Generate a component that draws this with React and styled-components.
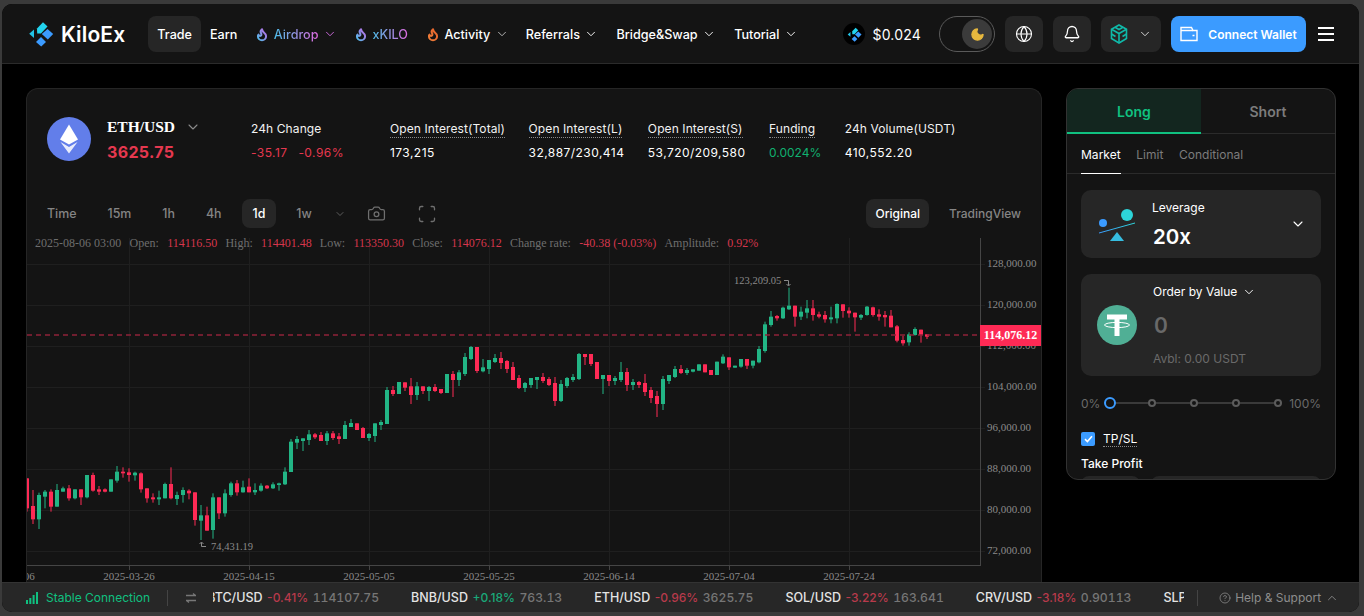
import React from "react";
import styled, { createGlobalStyle } from "styled-components";
import { Bell, Camera, ChevronDown, ChevronUp, CircleHelp, Globe, Moon, Scan } from "lucide-react";

const GlobalStyle = createGlobalStyle`
  html, body { margin: 0; padding: 0; height: 100%; background: #3a3a3a; overflow: hidden; }
  * { box-sizing: border-box; }
  body { font-family: Inter, "Noto Sans", sans-serif; color: #fff; }
`;

const App_ = styled.div`
  margin: 4px 5px 4px 2px;
  height: 608px;
  display: flex;
  flex-direction: column;
  background: #000;
  border-radius: 10px;
  overflow: hidden;
`;

const Header = styled.header`
  height: 60px;
  flex: none;
  display: flex;
  align-items: center;
  padding: 1px 25px 0 26px;
  background: #141414;
  border-bottom: 1px solid #2b2b2b;
`;
const Logo = styled.div`
  display: flex;
  align-items: center;
  gap: 7px;
  margin-right: 23px;
  font-size: 21px;
  font-weight: 600;
  letter-spacing: 0.15px;
`;
const Nav = styled.nav`
  display: flex;
  align-items: center;
`;
const NavItem = styled.div`
  height: 36px;
  padding: 0 9px;
  display: flex;
  align-items: center;
  gap: 4.5px;
  font-size: 12.6px;
  font-weight: 500;
  border-radius: 8px;
  color: #fff;
  background: ${(p) => (p.$active ? "#262626" : "transparent")};
  svg:last-child:not(:first-child) { margin-right: -1px; }
`;
const GradientLabel = styled.span`
  background: linear-gradient(90deg, #4dbde8, #e06ae0);
  -webkit-background-clip: text;
  background-clip: text;
  color: transparent;
`;
const HeaderRight = styled.div`
  margin-left: auto;
  display: flex;
  align-items: center;
  gap: 10px;
`;
const TokenPrice = styled.div`
  display: flex;
  align-items: center;
  gap: 7px;
  margin-right: 8px;
  font-size: 14px;
  font-weight: 400;
  letter-spacing: 0.2px;
`;
const TokenBadge = styled.div`
  width: 22px;
  height: 22px;
  border-radius: 50%;
  background: #000;
  display: flex;
  align-items: center;
  justify-content: center;
`;
const Toggle = styled.div`
  width: 56px;
  height: 36px;
  border-radius: 18px;
  border: 1px solid #5a5a5a;
  display: flex;
  align-items: center;
  justify-content: flex-end;
  padding-right: 2px;
`;
const ToggleKnob = styled.div`
  width: 30px;
  height: 30px;
  border-radius: 50%;
  background: #3b3b3b;
  display: flex;
  align-items: center;
  justify-content: center;
`;
const IconButton = styled.div`
  width: ${(p) => p.$w || 38}px;
  height: 36px;
  border-radius: 8px;
  background: #262626;
  display: flex;
  align-items: center;
  justify-content: center;
  gap: 10px;
`;
const WalletButton = styled.div`
  width: 135px;
  height: 36px;
  border-radius: 8px;
  background: #3b9bff;
  display: flex;
  align-items: center;
  justify-content: center;
  gap: 10px;
  font-size: 12px;
  font-weight: 600;
`;
const Burger = styled.div`
  margin-left: 2px;
  width: 16px;
  display: flex;
  flex-direction: column;
  gap: 4.7px;
  span { height: 1.3px; background: #fff; display: block; }
`;

const Main = styled.main`
  flex: 1;
  min-height: 0;
  display: flex;
  gap: 24px;
  padding: 24px 23px 0 24px;
`;
const ChartPanel = styled.section`
  width: 1016px;
  flex: none;
  display: flex;
  flex-direction: column;
  background: #141414;
  border: 1px solid #252525;
  border-bottom: 0;
  border-radius: 12px 12px 0 0;
  overflow: hidden;
`;
const PairHeader = styled.div`
  height: 110px;
  flex: none;
  padding: 28px 20px 0;
  display: flex;
  align-items: flex-start;
`;
const PairBlock = styled.div`
  width: 144px;
  margin-left: 16px;
  flex: none;
`;
const PairName = styled.div`
  height: 20px;
  display: flex;
  align-items: center;
  gap: 10px;
  font-family: "Liberation Serif", serif;
  font-size: 15.5px;
  font-weight: 700;
  svg { color: #8a8a8a; }
`;
const PairPrice = styled.div`
  margin-top: 5px;
  font-size: 16px;
  font-weight: 700;
  letter-spacing: 0.35px;
  color: #e5384f;
`;
const Stats = styled.div`
  margin-top: 3px;
  display: flex;
  gap: 23.5px;
`;
const Stat = styled.div`
  display: flex;
  flex-direction: column;
  align-items: flex-start;
  font-size: 12px;
  width: ${(p) => (p.$w ? `${p.$w}px` : "auto")};
`;
const StatLabel = styled.span`
  height: 18px;
  line-height: 17px;
  color: #f2f2f2;
  border-bottom: 1px ${(p) => (p.$plain ? "none" : "dotted")} #8a8a8a;
  white-space: nowrap;
  letter-spacing: 0.1px;
`;
const StatValue = styled.span`
  margin-top: 7px;
  line-height: 16px;
  letter-spacing: ${(p) => (p.$tight ? 0 : 0.45)}px;
  white-space: nowrap;
  color: ${(p) => p.$color || "#fff"};
  word-spacing: ${(p) => p.$spaced || 0}px;
`;
const Toolbar = styled.div`
  height: 29px;
  flex: none;
  margin-bottom: 8px;
  padding: 0 9px;
  display: flex;
  align-items: center;
  gap: 9px;
`;
const TimeButton = styled.div`
  height: 29px;
  padding: 0 ${(p) => p.$px || 11}px;
  display: flex;
  align-items: center;
  border-radius: 8px;
  font-size: 12.4px;
  font-weight: 500;
  white-space: nowrap;
  color: ${(p) => (p.$active ? "#fff" : "#858585")};
  background: ${(p) => (p.$active ? "#262626" : "transparent")};
`;
const ViewButton = styled(TimeButton)`
  font-size: 12px;
`;
const ToolIcon = styled.div`
  display: flex;
  align-items: center;
  color: #6f6f6f;
  margin-left: ${(p) => p.$ml || 0}px;
`;
const ViewSwitch = styled.div`
  margin-left: auto;
  display: flex;
  gap: 9px;
`;
const ChartArea = styled.div`
  position: relative;
  flex: 1;
  min-height: 0;
`;
const Ohlc = styled.div`
  position: absolute;
  left: 8px;
  top: 0;
  height: 14px;
  display: flex;
  align-items: center;
  gap: 8.2px;
  font-family: "Liberation Serif", serif;
  font-size: 12px;
  color: #6e6e6e;
  white-space: nowrap;
  b { font-weight: 400; color: #d6364c; margin-left: 8.3px; }
`;

const SidePanel = styled.aside`
  width: 270px;
  height: 392px;
  flex: none;
  background: #141414;
  border: 1px solid #323232;
  border-radius: 12px;
  overflow: hidden;
`;
const SideTabs = styled.div`
  display: flex;
  height: 45px;
  border-bottom: 1px solid #2b2b2b;
`;
const SideTab = styled.div`
  flex: 1;
  margin-bottom: -1px;
  padding-top: 2px;
  display: flex;
  align-items: center;
  justify-content: center;
  font-size: 14px;
  font-weight: 600;
  color: ${(p) => (p.$active ? "#10c080" : "#7c7c7c")};
  background: ${(p) => (p.$active ? "#13261f" : "transparent")};
  border-bottom: 2px solid ${(p) => (p.$active ? "#10c080" : "transparent")};
`;
const SubTabs = styled.div`
  height: 40px;
  padding: 0 14px;
  display: flex;
  gap: 15.5px;
  border-bottom: 1px solid #2b2b2b;
`;
const SubTab = styled.div`
  height: 40px;
  padding-top: 2px;
  display: flex;
  align-items: center;
  font-size: 12px;
  letter-spacing: 0.03px;
  color: ${(p) => (p.$active ? "#fff" : "#7c7c7c")};
  border-bottom: 1px solid ${(p) => (p.$active ? "#fff" : "transparent")};
`;
const SideBody = styled.div`
  padding: 16px 14px 0;
`;
const Card = styled.div`
  height: ${(p) => p.$h}px;
  background: #262626;
  border-radius: 10px;
  display: flex;
  align-items: center;
  margin-bottom: 16px;
  padding-left: 16px;
`;
const CardText = styled.div`
  margin-left: ${(p) => p.$ml}px;
  flex: 1;
  display: flex;
  flex-direction: column;
`;
const CardLabel = styled.div`
  font-size: 12px;
  line-height: 16px;
  display: flex;
  align-items: center;
  gap: 5px;
`;
const LeverageValue = styled.div`
  margin: 8px 0 -2px 1px;
  font-size: 20.5px;
  line-height: 26px;
  font-weight: 600;
`;
const AmountValue = styled.div`
  margin: 14px 0 0 1px;
  font-size: 21px;
  line-height: 24px;
  font-weight: 600;
  color: #696969;
`;
const Avbl = styled.div`
  margin-top: 13px;
  font-size: 12px;
  line-height: 16px;
  color: #6a6a6a;
`;
const CardChevron = styled.div`
  margin-right: 15px;
  display: flex;
`;
const SliderRow = styled.div`
  height: 22px;
  margin-top: 16px;
  display: flex;
  align-items: center;
  font-size: 12px;
  color: #6a6a6a;
`;
const SliderTrack = styled.div`
  flex: 1;
  height: 2px;
  margin: 0 7px 0 6px;
  background: #3a3a3a;
  display: flex;
  align-items: center;
  justify-content: space-between;
`;
const SliderDot = styled.div`
  flex: none;
  width: ${(p) => (p.$on ? 12 : 8)}px;
  height: ${(p) => (p.$on ? 12 : 8)}px;
  margin: 0 ${(p) => (p.$on ? -2 : 0)}px;
  border-radius: 50%;
  background: #141414;
  border: 2px solid ${(p) => (p.$on ? "#3b9bff" : "#5c5c5c")};
`;
const CheckRow = styled.div`
  margin-top: 17px;
  display: flex;
  align-items: center;
  gap: 8px;
  font-size: 12px;
`;
const Checkbox = styled.div`
  width: 14px;
  height: 14px;
  border-radius: 2px;
  background: #3b9bff;
  display: flex;
  align-items: center;
  justify-content: center;
`;
const Dotted = styled.span`
  line-height: 15px;
  border-bottom: 1px dotted #8a8a8a;
`;
const FieldLabel = styled.div`
  margin-top: 9px;
  font-size: 12px;
  font-weight: 500;
  line-height: 16px;
`;
const Fields = styled.div`
  margin-top: 4px;
  display: flex;
  gap: 11px;
`;
const Field = styled.div`
  height: 30px;
  flex: ${(p) => (p.$grow ? 1 : "none")};
  width: ${(p) => (p.$grow ? "auto" : "59px")};
  background: #262626;
  border-radius: 8px;
`;

const Footer = styled.footer`
  height: 30px;
  flex: none;
  background: #272727;
  border-top: 1px solid #333;
  display: flex;
  align-items: center;
  padding: 0 20px 0 24px;
  font-size: 12px;
`;
const Connection = styled.div`
  display: flex;
  align-items: center;
  gap: 8px;
  color: #10c080;
  white-space: nowrap;
`;
const Divider = styled.div`
  width: 1px;
  height: 16px;
  flex: none;
  background: #444;
  margin: ${(p) => p.$m};
`;
const TickerWindow = styled.div`
  width: 971px;
  flex: none;
  overflow: hidden;
  margin-left: 16px;
`;
const Track = styled.div`
  display: flex;
  gap: 32px;
  margin-left: -6px;
  font-size: 12.5px;
  font-weight: 500;
  white-space: nowrap;
`;
const Tick = styled.div`
  display: flex;
  align-items: baseline;
  gap: 4.5px;
  color: #e4e4e4;
`;
const TickPct = styled.span`
  font-size: 12px;
  color: ${(p) => (p.$up ? "#1aa879" : "#b83a4b")};
`;
const TickPrice = styled.span`
  font-size: 12.2px;
  font-variant-numeric: tabular-nums;
  color: #767676;
`;
const Help = styled.div`
  display: flex;
  align-items: center;
  gap: 4px;
  color: #8d8d8d;
  white-space: nowrap;
`;

const flame = "M8.5 14.5A2.5 2.5 0 0 0 11 12c0-1.38-.5-2-1-3-1.072-2.143-.224-4.054 2-6 .5 2.5 2 4.9 4 6.5 2 1.6 3 3.5 3 5.5a7 7 0 1 1-14 0c0-1.153.433-2.294 1-3a2.5 2.5 0 0 0 2.5 2.5z";

function Flame({ id, from, to }) {
  return (
    <svg width="14" height="15" viewBox="0 0 24 24" fill="none">
      <defs>
        <linearGradient id={id} x1="0" y1="1" x2="1" y2="0">
          <stop offset="0" stopColor={from} />
          <stop offset="1" stopColor={to} />
        </linearGradient>
      </defs>
      <path d={flame} stroke={`url(#${id})`} strokeWidth="3.4" strokeLinejoin="round" />
    </svg>
  );
}

function KiloMark({ size = 26 }) {
  return (
    <svg width={size} height={size} viewBox="0 0 26 26">
      <path d="M9 7.5 15 1.3 19.5 5.5 13 12.5 9.2 12.5z" fill="#22d3ee" />
      <path d="M6 8.5V17L1.2 12.8z" fill="#22c3e6" />
      <path d="M19.5 8 25.2 13 19.8 18.5 13.8 13z" fill="#3b9bff" />
      <path d="M13 16 18 21 13.2 25.6 8 21z" fill="#3b9bff" />
    </svg>
  );
}

const Chev = ({ size = 14, color = "currentColor" }) => <ChevronDown size={size} color={color} strokeWidth={1.6} />;

// Candles are [bodyTop, bodyBottom, wickTop, wickBottom, isUp], read at 3x from the picture.
const segments = [
  { x0: 20, y0: 440, start: 21, rows: [
    [115,205,115,215,0],[198,238,150,252,0],[165,238,158,267,1],[155,170,150,205,1],[155,200,148,215,0],[150,200,132,200,1],[145,155,140,155,1],[145,175,135,182,0],[148,175,148,178,1],[148,172,148,195,0],[105,172,105,175,1],[105,152,98,155,0],[148,155,138,165,0],[148,155,145,157,0],[118,155,118,155,1],[95,122,78,128,1],[95,100,82,113,0],[97,105,85,125,0],[98,106,95,122,1],[100,148,97,158,0],[145,175,145,188,0],[172,178,160,188,0],[172,178,152,195,1],[132,175,128,175,1],[132,175,82,178,0],[165,177,155,195,1],[150,165,142,188,1],[152,160,148,178,0],[157,240,157,257,0],[226,242,195,300,1],[226,272,200,272,0],[172,270,160,296,1],[172,220,172,237,0],[160,220,148,230,1],[130,165,125,170,1],[130,157,120,167,0],[142,157,122,158,1],[140,157,115,157,0],[150,157,130,165,1],[137,152,130,155,1],[137,145,135,147,0],[133,145,127,147,1],[130,135,128,152,1],[95,133,82,135,1],
  ]},
  { x0: 285, y0: 340, start: 18, rows: [
    [305,396,297,396,1],[297,308,288,327,1],[295,303,295,333,1],[283,300,270,315,1],[283,292,279,297,0],[285,303,276,303,0],[280,303,273,315,1],[280,294,273,300,0],[289,297,279,312,0],[255,297,243,297,1],[249,261,237,261,1],[250,270,250,270,0],[264,294,261,294,0],[282,294,279,303,1],[250,288,250,306,1],[246,255,240,270,1],[150,252,141,252,1],[150,162,138,168,0],[126,162,126,162,1],[127,143,127,153,0],[139,165,114,192,0],[139,165,126,180,1],[139,153,139,162,0],[141,153,138,183,1],[141,153,132,156,0],[147,159,147,162,0],[102,159,102,159,1],[102,120,93,171,0],[97,120,90,138,1],[51,102,39,108,1],[21,57,18,60,1],[21,93,21,99,0],
  ]},
  { x0: 480, y0: 340, start: 9, rows: [
    [82,94,57,97,1],[60,87,60,102,1],[54,66,42,69,1],[54,69,36,87,0],[63,87,60,99,0],[81,120,66,120,0],[114,144,105,147,0],[129,144,126,156,1],[114,135,114,144,1],[111,120,111,147,1],[111,123,99,129,0],[117,135,111,138,0],[129,183,111,198,0],[132,183,120,186,1],[114,138,111,144,1],[111,120,102,126,1],[42,117,39,120,1],[42,51,42,75,0],[42,72,42,78,0],[66,117,66,117,0],[105,117,105,162,1],[105,123,105,138,0],[114,123,108,135,1],[96,120,66,126,1],[96,135,84,153,0],[126,135,117,150,1],[126,135,123,144,0],[129,156,102,168,0],[150,174,141,189,0],[168,192,153,231,0],[117,192,108,210,1],[105,123,105,132,1],[87,111,78,114,1],[87,99,75,102,0],[90,99,84,105,1],
  ]},
  { x0: 680, y0: 265, start: 39, rows: [
    [313,320,313,322,1],[298,317,298,317,1],[298,322,298,322,0],[315,330,315,330,0],[290,330,290,330,1],[275,295,268,297,1],[277,307,277,315,0],[302,308,302,308,1],[282,305,282,308,1],[282,302,282,312,0],[287,302,287,310,1],[252,292,243,295,1],[178,258,170,263,1],[155,180,138,185,1],[153,160,150,167,0],[128,160,125,162,1],[122,133,68,135,1],[122,155,122,185,0],[140,155,125,165,1],[130,143,105,160,1],[130,150,105,167,0],[148,155,140,160,0],[150,163,138,173,0],[157,163,125,175,1],[117,160,115,175,1],[118,138,118,158,0],[137,145,127,158,0],[143,157,143,200,0],[150,158,147,165,1],[125,150,123,152,1],[127,150,125,155,0],[148,155,133,167,0],[150,157,138,185,0],[152,187,135,187,0],[184,227,180,232,0],[225,235,212,242,0],[208,232,202,242,1],[192,210,187,212,1],[194,210,194,233,0],[208,215,208,222,0],
  ]},
];

const candles = segments.flatMap((s) =>
  s.rows.map((r, i) => ({
    x: s.x0 + (s.start + i * 18) / 3,
    top: s.y0 + r[0] / 3,
    bottom: s.y0 + r[1] / 3,
    high: s.y0 + r[2] / 3,
    low: s.y0 + r[3] / 3,
    up: r[4] === 1,
  }))
);

const priceLevels = [
  ["128,000.00", 264], ["120,000.00", 305], ["112,000.00", 346], ["104,000.00", 387],
  ["96,000.00", 428], ["88,000.00", 469], ["80,000.00", 510], ["72,000.00", 551],
];
const dateMarks = [
  ["2025-03-06", 9], ["2025-03-26", 129], ["2025-04-15", 249], ["2025-05-05", 369], ["2025-05-25", 489],
  ["2025-06-14", 609], ["2025-07-04", 729], ["2025-07-24", 849],
];
const GREEN = "#22b585";
const RED = "#fe2a55";

function Chart() {
  const serif = '"Liberation Serif", serif';
  return (
    <svg width="1014" height="346" viewBox="27 236 1014 346" style={{ display: "block" }}>
      {priceLevels.map(([t, y]) => (
        <line key={t} x1="27" x2="985" y1={y + 0.5} y2={y + 0.5} stroke="#1f1f1f" />
      ))}
      {dateMarks.slice(1).map(([t, x]) => (
        <g key={t}>
          <line x1={x + 0.5} x2={x + 0.5} y1="238" y2="565" stroke="#1f1f1f" />
          <line x1={x + 0.5} x2={x + 0.5} y1="565" y2="570" stroke="#444" />
        </g>
      ))}
      <line x1="980.5" x2="980.5" y1="238" y2="566" stroke="#454545" />
      <line x1="27" x2="981" y1="565.5" y2="565.5" stroke="#454545" />
      {priceLevels.map(([t, y]) => (
        <text key={t} x="987" y={y + 3} fontFamily={serif} fontSize="11" fill="#8a8a8a">{t}</text>
      ))}
      {dateMarks.map(([t, x]) => (
        <text key={t} x={x} y="580" textAnchor="middle" fontFamily={serif} fontSize="11" fill="#8a8a8a">{t}</text>
      ))}
      {candles.map((c, i) => (
        <g key={i}>
          <line x1={c.x} x2={c.x} y1={c.high} y2={c.low} stroke={c.up ? GREEN : RED} strokeWidth="1" />
          <rect x={c.x - 2} y={c.top} width="4" height={Math.max(c.bottom - c.top, 1)} fill={c.up ? GREEN : RED} />
        </g>
      ))}
      <line x1="27" x2="980" y1="335" y2="335" stroke="#8f2239" strokeWidth="1.6" strokeDasharray="5 4" />
      <rect x="980" y="325" width="61" height="21" fill={RED} />
      <text x="1010.5" y="339" textAnchor="middle" fontFamily={serif} fontSize="12" fontWeight="700" fill="#fff">114,076.12</text>
      <text x="734" y="284" fontFamily={serif} fontSize="10.5" fill="#8a8a8a">123,209.05</text>
      <path d="M784 280.5h4.5v5M786.5 284l2 2 2-2" fill="none" stroke="#8a8a8a" />
      <text x="211" y="550" fontFamily={serif} fontSize="10.5" fill="#8a8a8a">74,431.19</text>
      <path d="M206 546.5h-4.5v-4M199.500 544l2-2 2 2" fill="none" stroke="#8a8a8a" />
    </svg>
  );
}

const tickers = [
  ["BTC/USD", "-0.41%", "114107.75"],
  ["BNB/USD", "+0.18%", "763.13", true],
  ["ETH/USD", "-0.96%", "3625.75"],
  ["SOL/USD", "-3.22%", "163.641"],
  ["CRV/USD", "-3.18%", "0.90113"],
  ["SLP/USD", "-1.02%", "0.00210"],
];

export default function App() {
  return (
    <App_>
      <GlobalStyle />
      <Header>
        <Logo>
          <KiloMark />
          <span>KiloEx</span>
        </Logo>
        <Nav>
          <NavItem $active>Trade</NavItem>
          <NavItem>Earn</NavItem>
          <NavItem>
            <Flame id="f1" from="#4dbde8" to="#c46ae8" />
            <GradientLabel>Airdrop</GradientLabel>
            <Chev color="#d06ae0" />
          </NavItem>
          <NavItem>
            <Flame id="f2" from="#4dbde8" to="#c46ae8" />
            <GradientLabel>xKILO</GradientLabel>
          </NavItem>
          <NavItem>
            <Flame id="f3" from="#f0803a" to="#e8622a" />
            Activity
            <Chev color="#bbb" />
          </NavItem>
          <NavItem>Referrals<Chev /></NavItem>
          <NavItem>Bridge&amp;Swap<Chev /></NavItem>
          <NavItem>Tutorial<Chev /></NavItem>
        </Nav>
        <HeaderRight>
          <TokenPrice>
            <TokenBadge><KiloMark size={15} /></TokenBadge>
            $0.024
          </TokenPrice>
          <Toggle>
            <ToggleKnob><Moon size={15} fill="#e8b93e" color="#e8b93e" /></ToggleKnob>
          </Toggle>
          <IconButton><Globe size={18} strokeWidth={1.5} /></IconButton>
          <IconButton><Bell size={18} strokeWidth={1.7} /></IconButton>
          <IconButton $w={60}>
            <svg width="18" height="20" viewBox="0 0 18 20" fill="none" stroke="#10b8a8" strokeWidth="1.6">
              <path d="M9 1 16.500 5.200V14.500L9 19 1.500 14.500V5.200z" />
              <path d="M1.500 5.200 9 9.500 16.500 5.200M9 9.500V19M5 3.200 9 5.500 13 3.200M1.500 10 5.500 12.500M16.500 10 12.500 12.500" />
            </svg>
            <Chev color="#ddd" />
          </IconButton>
          <WalletButton>
            <svg width="18" height="16" viewBox="0 0 18 16" fill="none" stroke="#fff" strokeWidth="1.4">
              <path d="M1 14.500V1.500H11.500L13 4.500H17V14.500z" />
              <path d="M1 4.500H13M12.500 9.500H14.500" />
            </svg>
            Connect Wallet
          </WalletButton>
          <Burger><span /><span /><span /></Burger>
        </HeaderRight>
      </Header>

      <Main>
        <ChartPanel>
          <PairHeader>
            <svg width="44" height="44" viewBox="0 0 44 44" style={{ flex: "none" }}>
              <circle cx="22" cy="22" r="22" fill="#627eea" />
              <path d="M22 7.500 13 22.500 22 27.500 31 22.500z" fill="#fff" />
              <path d="M13.500 25 22 36.500 30.500 25 22 30z" fill="#fff" fillOpacity="0.85" />
            </svg>
            <PairBlock>
              <PairName>ETH/USD <Chev size={16} /></PairName>
              <PairPrice>3625.75</PairPrice>
            </PairBlock>
            <Stats>
              <Stat $w={115.5}>
                <StatLabel $plain>24h Change</StatLabel>
                <StatValue $color="#e5384f" $spaced={7}>-35.17 -0.96%</StatValue>
              </Stat>
              <Stat>
                <StatLabel>Open Interest(Total)</StatLabel>
                <StatValue>173,215</StatValue>
              </Stat>
              <Stat>
                <StatLabel>Open Interest(L)</StatLabel>
                <StatValue>32,887/230,414</StatValue>
              </Stat>
              <Stat>
                <StatLabel>Open Interest(S)</StatLabel>
                <StatValue>53,720/209,580</StatValue>
              </Stat>
              <Stat>
                <StatLabel>Funding</StatLabel>
                <StatValue $color="#10b070" $tight>0.0024%</StatValue>
              </Stat>
              <Stat>
                <StatLabel $plain>24h Volume(USDT)</StatLabel>
                <StatValue>410,552.20</StatValue>
              </Stat>
            </Stats>
          </PairHeader>
          <Toolbar>
            <TimeButton>Time</TimeButton>
            <TimeButton>15m</TimeButton>
            <TimeButton>1h</TimeButton>
            <TimeButton>4h</TimeButton>
            <TimeButton $active>1d</TimeButton>
            <TimeButton>1w</TimeButton>
            <ToolIcon $ml={2}><Chev size={12} /></ToolIcon>
            <ToolIcon $ml={12}><Camera size={19} strokeWidth={1.6} /></ToolIcon>
            <ToolIcon $ml={22}><Scan size={20} strokeWidth={1.6} /></ToolIcon>
            <ViewSwitch>
              <ViewButton $active $px={9}>Original</ViewButton>
              <ViewButton>TradingView</ViewButton>
            </ViewSwitch>
          </Toolbar>
          <ChartArea>
            <Chart />
            <Ohlc>
              <span>2025-08-06 03:00</span>
              <span>Open:<b>114116.50</b></span>
              <span>High:<b>114401.48</b></span>
              <span>Low:<b>113350.30</b></span>
              <span>Close:<b>114076.12</b></span>
              <span>Change rate:<b>-40.38 (-0.03%)</b></span>
              <span>Amplitude:<b>0.92%</b></span>
            </Ohlc>
          </ChartArea>
        </ChartPanel>

        <SidePanel>
          <SideTabs>
            <SideTab $active>Long</SideTab>
            <SideTab>Short</SideTab>
          </SideTabs>
          <SubTabs>
            <SubTab $active>Market</SubTab>
            <SubTab>Limit</SubTab>
            <SubTab>Conditional</SubTab>
          </SubTabs>
          <SideBody>
            <Card $h={68}>
              <svg width="40" height="36" viewBox="0 0 40 36" style={{ flex: "none" }}>
                <defs>
                  <linearGradient id="lev" x1="0" y1="0" x2="1" y2="0">
                    <stop offset="0" stopColor="#3b9bff" />
                    <stop offset="1" stopColor="#2dd4d8" />
                  </linearGradient>
                </defs>
                <circle cx="6" cy="17" r="4" fill="#3b9bff" />
                <circle cx="30" cy="9" r="6" fill="#2dd4d8" />
                <path d="M2 27 38 17" stroke="url(#lev)" strokeWidth="1" />
                <path d="M20 26 27 35H13z" fill="#36bde0" />
              </svg>
              <CardText $ml={15}>
                <CardLabel>Leverage</CardLabel>
                <LeverageValue>20x</LeverageValue>
              </CardText>
              <CardChevron><Chev size={16} /></CardChevron>
            </Card>
            <Card $h={102}>
              <svg width="40" height="40" viewBox="0 0 40 40" style={{ flex: "none" }}>
                <circle cx="20" cy="20" r="20" fill="#50af95" />
                <path d="M10 9.500H30V14.500H22.500V31H17.500V14.500H10z" fill="#fff" />
                <ellipse cx="20" cy="20" rx="12.500" ry="2.600" fill="none" stroke="#fff" strokeWidth="1" />
              </svg>
              <CardText $ml={16}>
                <CardLabel>Order by Value <Chev size={14} /></CardLabel>
                <AmountValue>0</AmountValue>
                <Avbl>Avbl: 0.00 USDT</Avbl>
              </CardText>
            </Card>
            <SliderRow>
              0%
              <SliderTrack>
                <SliderDot $on />
                <SliderDot />
                <SliderDot />
                <SliderDot />
                <SliderDot />
              </SliderTrack>
              100%
            </SliderRow>
            <CheckRow>
              <Checkbox>
                <svg width="9" height="8" viewBox="0 0 9 8" fill="none" stroke="#fff" strokeWidth="1.600"><path d="M1 4.200 3.400 6.500 8 1.300" /></svg>
              </Checkbox>
              <Dotted>TP/SL</Dotted>
            </CheckRow>
            <FieldLabel>Take Profit</FieldLabel>
            <Fields>
              <Field />
              <Field $grow />
            </Fields>
          </SideBody>
        </SidePanel>
      </Main>

      <Footer>
        <Connection>
          <svg width="12" height="12" viewBox="0 0 12 12" fill="#10c080">
            <rect x="0" y="8" width="2" height="4" />
            <rect x="3.300" y="6" width="2" height="6" />
            <rect x="6.600" y="3" width="2" height="9" />
            <rect x="10" y="0" width="2" height="12" />
          </svg>
          Stable Connection
        </Connection>
        <Divider $m="0 0 0 17px" />
        <svg width="12" height="12" viewBox="0 0 12 12" fill="none" stroke="#777" strokeWidth="1.300" style={{ marginLeft: 17, flex: "none" }}>
          <path d="M1 3.500H11M8 1.500 10.500 3.500M11 8.500H1M4 10.500 1.500 8.500" />
        </svg>
        <TickerWindow>
          <Track>
            {tickers.map(([name, pct, price, up]) => (
              <Tick key={name}>
                <span>{name}</span>
                <TickPct $up={up}>{pct}</TickPct>
                <TickPrice>{price}</TickPrice>
              </Tick>
            ))}
          </Track>
        </TickerWindow>
        <Divider $m="0 21px 0 13px" />
        <Help>
          <CircleHelp size={12} strokeWidth={1.5} />
          Help &amp; Support
          <ChevronUp size={14} strokeWidth={1.5} />
        </Help>
      </Footer>
    </App_>
  );
}
